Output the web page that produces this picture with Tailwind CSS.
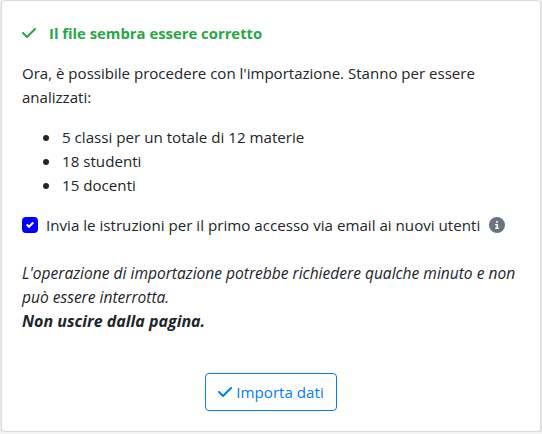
<!DOCTYPE html>
<html lang="it">
<head>
  <meta charset="UTF-8" />
  <meta name="viewport" content="width=device-width, initial-scale=1.0" />
  <title>Importazione dati</title>
  <script src="https://cdn.jsdelivr.net/npm/@tailwindcss/browser@4"></script>
</head>
<body class="bg-[#f4f4f4] px-px font-['Open_Sans','Noto_Sans',sans-serif] text-[15.15px] leading-6 text-[#212529]">
  <div class="w-[540px] h-[432px] bg-white border border-[#dcdcdc] rounded-[4px] shadow-sm pt-5 px-5 flex flex-col">
    <h1 class="flex items-center text-[#28a745] font-bold whitespace-nowrap">
      <svg class="w-[14px] h-4 mr-[13px]" viewBox="0 0 448 512" fill="currentColor"><path d="M438.600 105.400c12.500 12.500 12.500 32.800 0 45.300l-256 256c-12.500 12.500-32.800 12.500-45.300 0l-128-128c-12.500-12.500-12.500-32.800 0-45.300s32.800-12.500 45.300 0L160 338.700 393.400 105.400c12.500-12.500 32.800-12.500 45.300 0z"/></svg>
      <span class="text-[14.85px]">Il file sembra essere corretto</span>
    </h1>
    <p class="mt-4 whitespace-nowrap text-[15.05px]">Ora, è possibile procedere con l'importazione. Stanno per essere<br />analizzati:</p>
    <ul class="mt-4 pl-[21px]">
      <li class="flex items-center h-6"><span class="w-1.5 h-1.5 mt-px mr-[13px] rounded-full bg-[#212529]"></span>5 classi per un totale di 12 materie</li>
      <li class="flex items-center h-6"><span class="w-1.5 h-1.5 mt-px mr-[13px] rounded-full bg-[#212529]"></span>18 studenti</li>
      <li class="flex items-center h-6"><span class="w-1.5 h-1.5 mt-px mr-[13px] rounded-full bg-[#212529]"></span>15 docenti</li>
    </ul>
    <label class="mt-4 flex items-center whitespace-nowrap">
      <span class="w-4 h-4 mr-2 rounded-[4px] bg-[#0000ff] flex items-center justify-center">
        <svg class="w-2 h-2" viewBox="0 0 8 8" fill="#fff"><path d="M6.564.75l-3.590 3.612-1.538-1.550L0 4.260l2.974 2.990L8 2.193z"/></svg>
      </span>
      <span class="w-[435px]">Invia le istruzioni per il primo accesso via email ai nuovi utenti</span>
      <svg class="w-4 h-4 ml-2 text-[#6c757d]" viewBox="0 0 512 512" fill="currentColor"><path d="M256 512A256 256 0 1 0 256 0a256 256 0 1 0 0 512zM216 336h24V272H216c-13.300 0-24-10.700-24-24s10.700-24 24-24h48c13.300 0 24 10.700 24 24v88h8c13.300 0 24 10.700 24 24s-10.700 24-24 24H216c-13.300 0-24-10.700-24-24s10.700-24 24-24zm40-208a32 32 0 1 1 0 64 32 32 0 1 1 0-64z"/></svg>
    </label>
    <p class="mt-6 italic whitespace-nowrap text-[15.55px]">L'operazione di importazione potrebbe richiedere qualche minuto e non<br />può essere interrotta.<br /><strong class="text-base/6">Non uscire dalla pagina.</strong></p>
    <div class="mt-10 flex justify-center">
      <button type="button" class="w-[132px] h-[38px] border border-[#007bff] rounded-[4px] text-[#007bff] flex items-center justify-center">
        <svg class="w-[14px] h-4 mr-1" viewBox="0 0 448 512" fill="currentColor"><path d="M438.600 105.400c12.500 12.500 12.500 32.800 0 45.300l-256 256c-12.500 12.500-32.800 12.500-45.300 0l-128-128c-12.500-12.500-12.500-32.800 0-45.300s32.800-12.500 45.300 0L160 338.700 393.400 105.400c12.500-12.500 32.800-12.500 45.300 0z"/></svg>
        <span>Importa dati</span>
      </button>
    </div>
  </div>
</body>
</html>
